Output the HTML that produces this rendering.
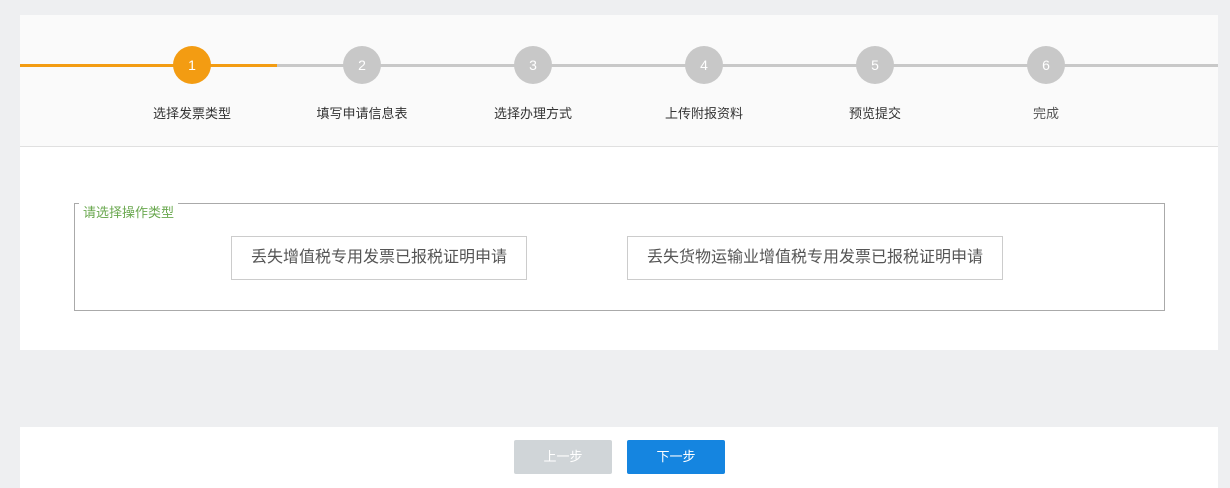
<!DOCTYPE html>
<html><head><meta charset="utf-8"><style>
*{margin:0;padding:0;box-sizing:border-box}
body{width:1230px;height:488px;background:#eeeff1;font-family:"Liberation Sans","Noto Sans CJK SC",sans-serif;position:relative;overflow:hidden}
.a{position:absolute}
.head{left:20px;top:15px;width:1198px;height:132px;background:#fafafa;border-bottom:1px solid #e0e0e0}
.line{top:64px;height:3px}
.c{width:38px;height:38px;border-radius:50%;background:#c8c8c8;color:#fff;font-size:14px;line-height:38px;text-align:center;top:46px}
.lb{top:103px;width:160px;text-align:center;font-size:13px;color:#333}
.body{left:20px;top:147px;width:1198px;height:203px;background:#fff}
.fs{left:74px;top:203px;width:1091px;height:108px;border:1px solid #aaa}
.lg{left:79px;top:202px;background:#fff;padding:0 4px;font-size:13px;color:#6aa84f}
.btn{top:236px;height:44px;border:1px solid #ccc;background:#fff;font-size:16px;color:#555;line-height:42px;text-align:center}
.foot{left:20px;top:427px;width:1198px;height:61px;background:#fff}
.b2{top:440px;width:98px;height:34px;border-radius:2px;color:#fff;font-size:13px;line-height:34px;text-align:center}
</style></head><body>
<div class="a head"></div>
<div class="a line" style="left:20px;width:257px;background:#f39c12"></div>
<div class="a line" style="left:277px;width:941px;background:#c8c8c8"></div>
<div class="a c" style="left:173px;background:#f39c12">1</div>
<div class="a c" style="left:343px">2</div>
<div class="a c" style="left:514px">3</div>
<div class="a c" style="left:685px">4</div>
<div class="a c" style="left:856px">5</div>
<div class="a c" style="left:1027px">6</div>
<div class="a lb" style="left:112px">选择发票类型</div>
<div class="a lb" style="left:282px">填写申请信息表</div>
<div class="a lb" style="left:453px">选择办理方式</div>
<div class="a lb" style="left:624px">上传附报资料</div>
<div class="a lb" style="left:795px">预览提交</div>
<div class="a lb" style="left:966px;color:#555">完成</div>
<div class="a body"></div>
<div class="a fs"></div>
<div class="a lg">请选择操作类型</div>
<div class="a btn" style="left:231px;width:296px">丢失增值税专用发票已报税证明申请</div>
<div class="a btn" style="left:627px;width:376px">丢失货物运输业增值税专用发票已报税证明申请</div>
<div class="a foot"></div>
<div class="a b2" style="left:514px;background:#d0d5d8">上一步</div>
<div class="a b2" style="left:627px;background:#1585e0">下一步</div>
</body></html>
